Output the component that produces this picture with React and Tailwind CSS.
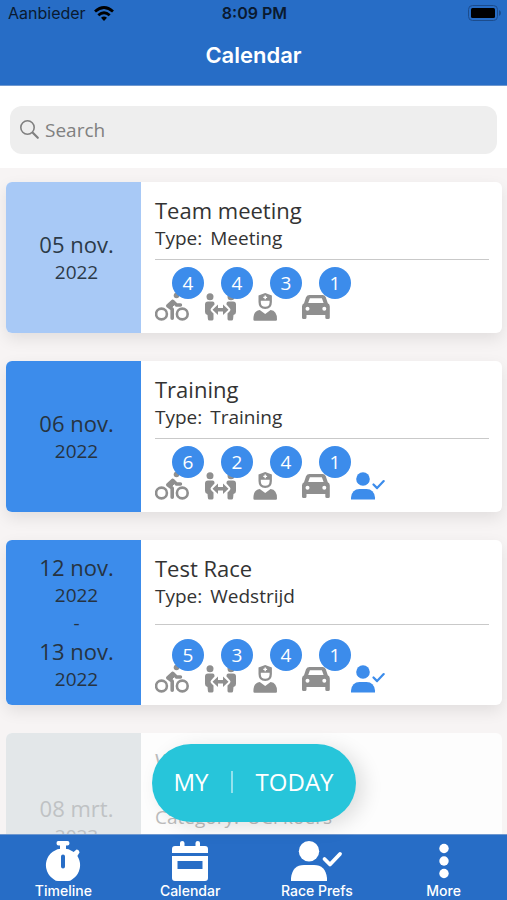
import React from "react";

const iconClass = "block h-7 w-[34px]";

function CyclistIcon() {
  return (
    <svg viewBox="0 0 34 28" className={iconClass} fill="none" stroke="currentColor" strokeLinecap="round" strokeLinejoin="round">
      <circle cx="6.500" cy="21" r="5.400" strokeWidth="2.600" />
      <circle cx="27.300" cy="21" r="5.400" strokeWidth="2.600" />
      <circle cx="21.500" cy="2.500" r="2.800" fill="currentColor" stroke="none" />
      <path d="M17.500 8.500 12.800 12.800l4.400 3.400v9" strokeWidth="3.600" />
      <path d="m18 8.500 3.500 3.500h4" strokeWidth="3.400" />
      <path d="m13 13 5-4.500 2 2.500-4 4Z" fill="currentColor" strokeWidth="1" />
    </svg>
  );
}

function CarryIcon() {
  return (
    <svg viewBox="0 0 34 28" className={iconClass} fill="currentColor">
      <circle cx="6" cy="3.800" r="3.500" />
      <circle cx="27" cy="3.800" r="3.500" />
      <path d="M4 8.500h4.500q2 0 2 2v1L7 15.500q-1 1.200 0 2.400l2.500 2.600V26q0 1.600-1.800 1.600H5.500Q4 27.600 3.900 26L3.500 22Q1 21.500 1 19v-7.500Q1 8.500 4 8.500Z" />
      <path d="M29 8.500h-4.500q-2 0-2 2v1l3.500 4q1 1.200 0 2.400l-2.500 2.600V26q0 1.600 1.800 1.600h2.200q1.500 0 1.600-1.600l.4-4q2.500-.5 2.500-3v-7.500q0-3-3-3Z" />
      <path d="M8.500 16.700 14 11.500v3.400h5v-3.400l5.500 5.200-5.500 5.200v-3.400h-5v3.400Z" />
    </svg>
  );
}

function StaffIcon() {
  return (
    <svg viewBox="0 0 34 28" className={iconClass} fill="currentColor">
      <path fillRule="evenodd" d="M5.500 2.500 12.200 0l6.700 2.500V9q0 7-6.700 7T5.500 9Zm2.300 5.300v1.400q0 4.500 4.400 4.500t4.400-4.500V7.800Zm3.700-5.300v1.200h-1.200v1.400h1.200v1.200h1.400V5.100h1.200V3.700h-1.200V2.500Z" />
      <path d="M.4 26.500q0-8.800 6.400-9.400l5.400 3.900 5.400-3.900q6.400.6 6.400 9.400 0 1.200-1.200 1.200H1.600Q.4 27.700.4 26.500Z" />
    </svg>
  );
}

function CarIcon() {
  return (
    <svg viewBox="0 0 34 28" className={iconClass} fill="currentColor">
      <path fillRule="evenodd" d="M7.500 2h13q2.500 0 3.300 2.300l2 5.900q2 .9 2 3.300v11q0 1.500-1.500 1.500h-1.500q-1.500 0-1.500-1.500V22H4.500v2.500Q4.500 26 3 26H1.500Q0 26 0 24.500v-11q0-2.400 2-3.300l2-5.900Q5 2 7.500 2Zm.4 3.200L6.200 10h15.400l-1.700-4.800ZM5.500 13.700a2 2 0 1 0 0 4 2 2 0 0 0 0-4Zm16.800 0a2 2 0 1 0 0 4 2 2 0 0 0 0-4Z" />
    </svg>
  );
}

function UserCheckIcon() {
  return (
    <svg viewBox="0 0 34 28" className={iconClass} fill="currentColor">
      <circle cx="12" cy="7" r="6.800" />
      <path d="M0 27.500v-2q1-8.500 8.500-8.500h7q7.500 0 8.500 8.500v2Z" />
      <path d="m22.500 12.500 3.600 3.600 6.600-7" fill="none" stroke="currentColor" strokeWidth="2.200" strokeLinecap="round" strokeLinejoin="round" />
    </svg>
  );
}

function StopwatchIcon() {
  return (
    <svg viewBox="0 0 36 40" className="block h-10 w-9" fill="currentColor">
      <path fillRule="evenodd" d="M18 7.500A16.700 16.700 0 0 0 9 38.500q1.500 1.500 4 1.500h10q2.500 0 4-1.500A16.700 16.700 0 0 0 18 7.500Zm0 6q2 0 2 2v10q0 2-2 2t-2-2v-10q0-2 2-2Z" />
      <path d="M13.500 0h9Q24.500 0 24.500 2.200t-2 2.300H21V9h-6V4.500h-1.500q-2 0-2-2.300T13.500 0ZM27.500 12l4-3.500q2.500 0 3 3L32 15.500Z" />
    </svg>
  );
}

function CalendarIcon() {
  return (
    <svg viewBox="0 0 36 40" className="block h-10 w-9" fill="currentColor">
      <path d="M3 5h5V2q0-2 2.200-2t2.300 2v3h11V2q0-2 2.300-2T28 2v3h5q3 0 3 3v4H0V8q0-3 3-3Z" />
      <path fillRule="evenodd" d="M0 15h36v22q0 3-3 3H3q-3 0-3-3Zm5.500 5v8h25v-8Z" />
    </svg>
  );
}

function RacePrefsIcon() {
  return (
    <svg viewBox="0 0 52 40" className="block h-10 w-[52px]" fill="currentColor">
      <circle cx="18" cy="10.200" r="10.200" />
      <path d="M0 40v-3q1.500-13 13-13h10q11.500 0 13 13v3Z" />
      <path d="m33.500 18 5.500 5.500L49 13" fill="none" stroke="currentColor" strokeWidth="3.800" strokeLinecap="round" strokeLinejoin="round" />
    </svg>
  );
}

function MoreIcon() {
  return (
    <svg viewBox="0 0 36 40" className="block h-10 w-9" fill="currentColor">
      <circle cx="18" cy="7.500" r="4.700" />
      <circle cx="18" cy="20" r="4.700" />
      <circle cx="18" cy="32.500" r="4.700" />
    </svg>
  );
}

function WifiIcon() {
  return (
    <svg viewBox="0 0 20 15" className="h-[15px] w-5" fill="none" stroke="currentColor" strokeWidth="2.800">
      <path d="M1 5.500Q10-2.500 19 5.500M4.300 9.200q5.700-5 11.400 0" />
      <path d="m10 15-3-3.300q3-2.400 6 0Z" fill="currentColor" stroke="none" />
    </svg>
  );
}

function BatteryIcon() {
  return (
    <svg viewBox="0 0 33 16" className="h-4 w-[33px]">
      <rect x=".500" y=".500" width="29" height="15" rx="4" fill="none" stroke="#1c4c8c" />
      <rect x="3" y="3" width="24" height="10" rx="1.500" fill="#000" />
      <path d="M31 5q2 1 2 3t-2 3Z" fill="#1c4c8c" />
    </svg>
  );
}

const roleIcons = [
  { label: "Riders", Icon: CyclistIcon },
  { label: "Carers", Icon: CarryIcon },
  { label: "Staff", Icon: StaffIcon },
  { label: "Cars", Icon: CarIcon },
];

const events = [
  { dates: [["05 nov.", "2022"]], title: "Team meeting", lines: [["Type:", "Meeting"]], counts: [4, 4, 3, 1], tone: "bg-[#a8c9f6] text-[#2c3a48]", height: "min-h-[151px]" },
  { dates: [["06 nov.", "2022"]], title: "Training", lines: [["Type:", "Training"]], counts: [6, 2, 4, 1], attending: true, tone: "bg-[#3c8ceb] text-[#263341]", height: "min-h-[151px]" },
  { dates: [["12 nov.", "2022"], ["13 nov.", "2022"]], title: "Test Race", lines: [["Type:", "Wedstrijd"]], counts: [5, 3, 4, 1], attending: true, tone: "bg-[#3c8ceb] text-[#263341]", height: "min-h-[165px]" },
  { dates: [["08 mrt.", "2023"]], title: "Wedstrijd", lines: [["Type:", "Wedstrijd"], ["Category:", "UCI koers"]], counts: [], tone: "bg-[#e3e7e9] text-[#bfc2c4]", height: "min-h-[178px]", past: true },
];

function EventCard({ event }) {
  return (
    <article
      className={`flex shrink-0 overflow-hidden rounded-md ${event.height} ${
        event.past ? "bg-[#fdfdfd] text-[#bdbdbd]" : "bg-white text-[#333333] shadow-[0_6px_16px_rgba(0,0,0,0.09)]"
      }`}
    >
      <div className={`flex w-[135px] shrink-0 flex-col items-center justify-center py-3 pl-1.5 text-center ${event.tone}`}>
        {event.dates.map(([day, year], i) => (
          <React.Fragment key={day}>
            {i > 0 && <span className="text-[19px] leading-7">-</span>}
            <span className="text-[22px] leading-7">{day}</span>
            <span className="text-[19px] leading-7">{year}</span>
          </React.Fragment>
        ))}
      </div>
      <div className="flex min-w-0 flex-1 flex-col justify-between pt-3.5 pr-[13px] pb-3 pl-3.5">
        <div>
          <h2 className="text-[22px] leading-7">{event.title}</h2>
          {event.lines.map(([label, value]) => (
            <p key={label} className="flex gap-2 text-[19px] leading-7">
              <span>{label}</span>
              <span>{value}</span>
            </p>
          ))}
        </div>
        <hr className="border-[#c9c9c9]" />
        <div className="flex h-[54px] text-[#8f8f8f]">
          {event.counts.map((count, i) => {
            const { label, Icon } = roleIcons[i];
            return (
              <div key={label} className="relative flex w-[49px] items-end" aria-label={label}>
                <Icon />
                <span className="absolute top-0 right-0 flex size-8 items-center justify-center rounded-full bg-[#3c8ceb] text-[19px] text-white">
                  {count}
                </span>
              </div>
            );
          })}
          {event.attending && (
            <div className="flex items-end text-[#3c8ceb]">
              <UserCheckIcon />
            </div>
          )}
        </div>
      </div>
    </article>
  );
}

const tabs = [
  { label: "Timeline", Icon: StopwatchIcon },
  { label: "Calendar", Icon: CalendarIcon },
  { label: "Race Prefs", Icon: RacePrefsIcon },
  { label: "More", Icon: MoreIcon },
];

export default function App() {
  return (
    <div className="flex h-screen flex-col overflow-hidden bg-[#f7f4f4] font-['Open_Sans','Noto_Sans',sans-serif]">
      <header className="shrink-0 border-b border-[#6f98cf] bg-[#276dc6] font-['Inter',sans-serif]">
        <div className="grid h-[26px] grid-cols-3 items-center pr-1.5 pl-2 text-base text-[#0a1a30]">
          <div className="flex items-center gap-2">
            <span>Aanbieder</span>
            <span className="text-black"><WifiIcon /></span>
          </div>
          <span className="text-center font-semibold">8:09 PM</span>
          <div className="flex justify-end"><BatteryIcon /></div>
        </div>
        <h1 className="h-[59px] text-center text-[22px] leading-[59px] font-semibold text-white">Calendar</h1>
      </header>

      <div className="shrink-0 bg-white px-2.5 pt-5 pb-3.5">
        <label className="flex h-12 items-center gap-[5px] rounded-xl bg-[#eeeeee] px-2.5 text-[#808080]">
          <svg viewBox="0 0 20 20" className="size-5" fill="none" stroke="currentColor" strokeWidth="1.600" strokeLinecap="round">
            <circle cx="7.500" cy="7.500" r="6.700" />
            <path d="m12.800 12.800 5 5" strokeWidth="2.200" />
          </svg>
          <input type="search" aria-label="Search" placeholder="Search" className="min-w-0 flex-1 bg-transparent text-[19px] outline-none placeholder:text-[#808080]" />
        </label>
      </div>

      <div className="relative flex min-h-0 flex-1 flex-col">
        <main className="flex min-h-0 flex-1 flex-col gap-7 overflow-hidden pt-3.5 pr-[5px] pl-1.5">
          {events.map((event) => (
            <EventCard key={event.title} event={event} />
          ))}
        </main>
        <div className="absolute bottom-3 left-1/2 flex h-[78px] w-[204px] -translate-x-1/2 items-center justify-between rounded-full bg-[#27c5da] px-[22px] pb-0.5 text-2xl text-white shadow-[8px_4px_20px_rgba(0,0,0,0.12)]">
          <button type="button">MY</button>
          <span className="h-[22px] w-0.5 bg-white/50" />
          <button type="button">TODAY</button>
        </div>
      </div>

      <nav className="grid h-[66px] shrink-0 grid-cols-4 border-t border-[#6f98cf] bg-[#276dc6] font-['Inter',sans-serif] text-white">
        {tabs.map(({ label, Icon }) => (
          <button key={label} type="button" className="flex flex-col items-center pt-1.5 text-sm leading-5 font-medium">
            <Icon />
            <span>{label}</span>
          </button>
        ))}
      </nav>
    </div>
  );
}
